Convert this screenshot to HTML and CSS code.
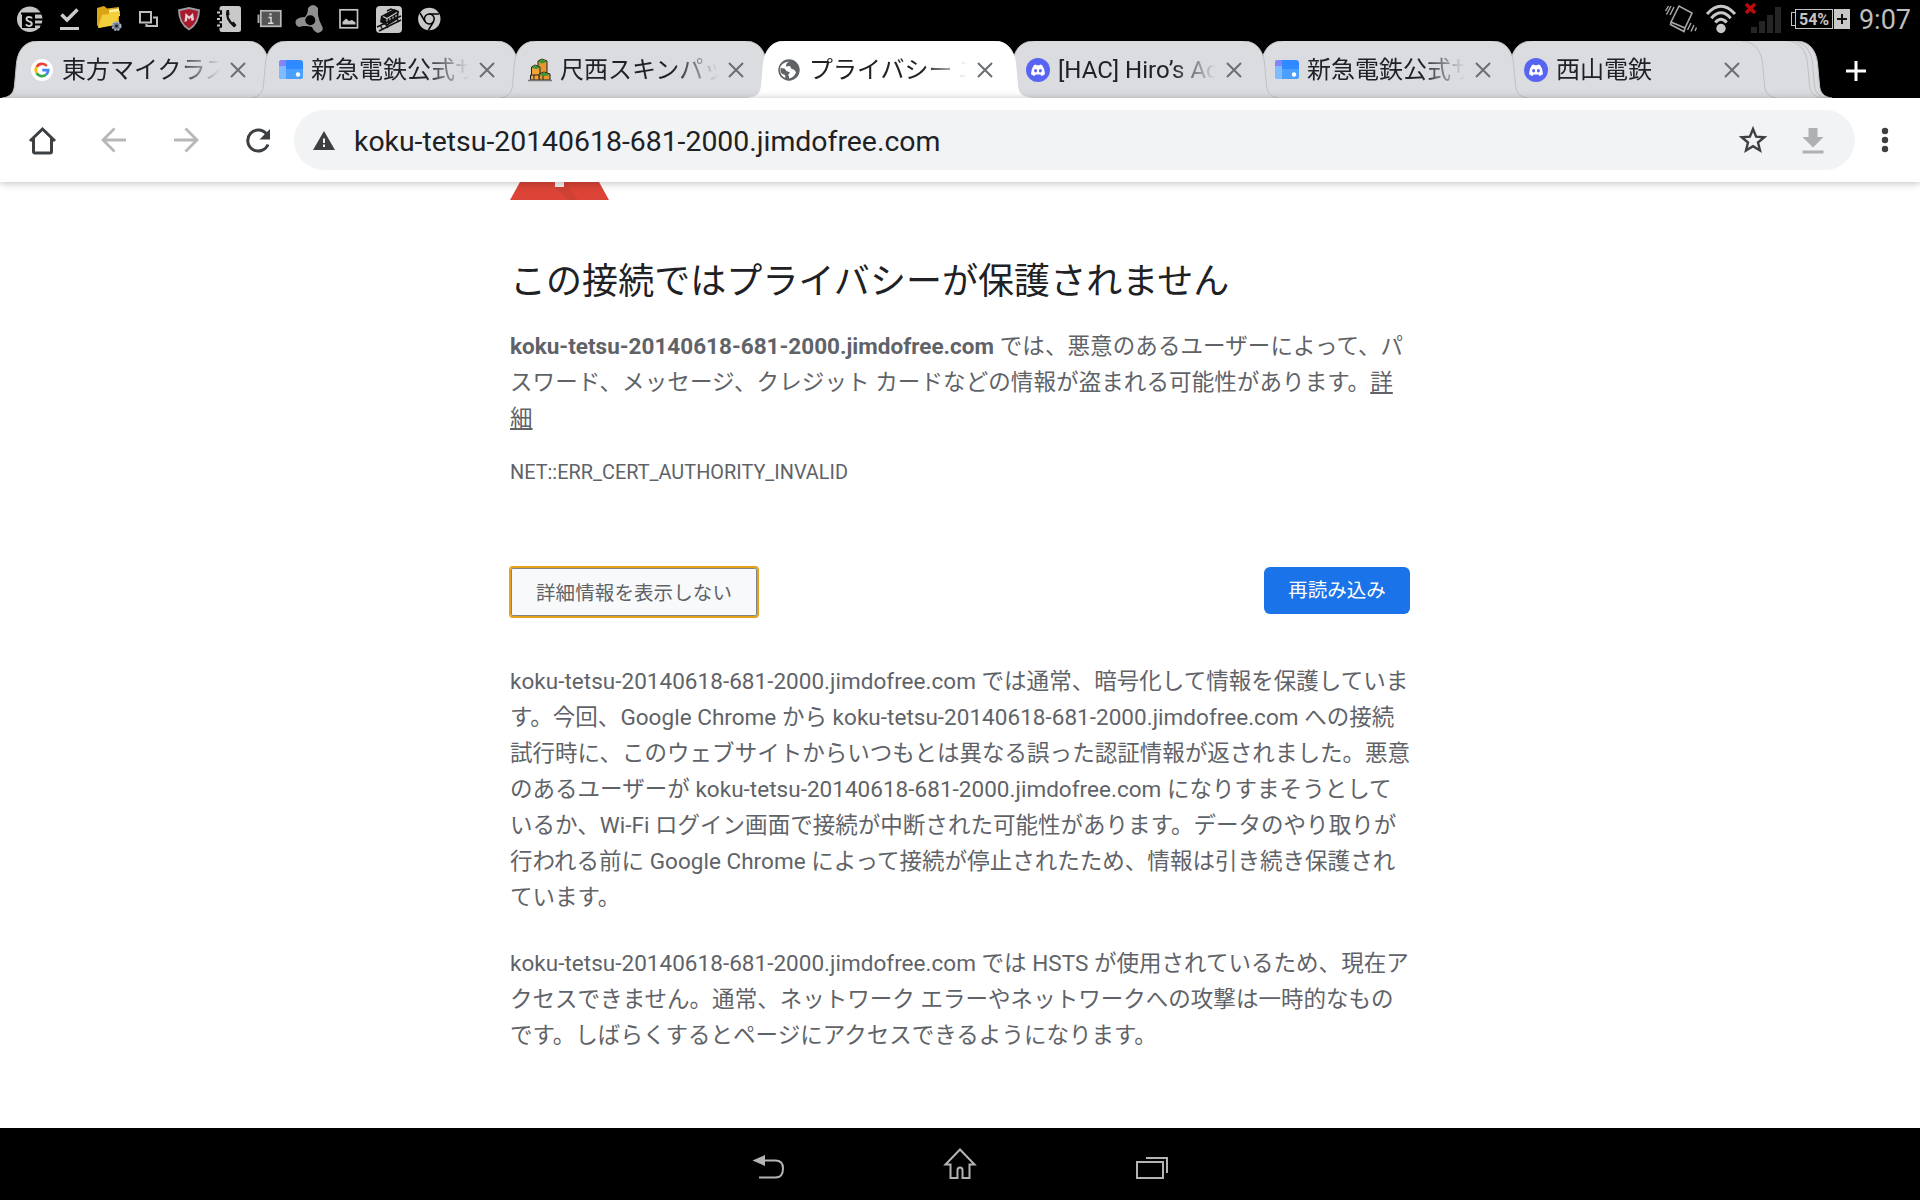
FILE: index.html
```html
<!DOCTYPE html>
<html lang="ja">
<head>
    <meta charset="UTF-8">
    <meta name="viewport" content="width=device-width, initial-scale=1.0">
    <title>プライバシー エラー</title>
    <link rel="stylesheet" href="styles.css">
</head>
<body>
    <!-- shared shapes -->
    <svg class="defs" width="0" height="0">
        <symbol id="tab-shape" viewBox="0 0 281 57">
            <path class="tab-fill" d="M0 57C9 56 12 51 12.500 44L14.500 22C16 9 23 0 36 0H245C258 0 265 9 266.500 22L268.500 44C269 51 272 56 281 57Z"/>
            <path class="tab-edge" d="M0 57C9 56 12 51 12.500 44L14.500 22C16 9 23 0 36 0M245 0C258 0 265 9 266.500 22L268.500 44C269 51 272 56 281 57"/>
        </symbol>
        <symbol id="close" viewBox="0 0 16 16">
            <path d="M1 1L15 15M15 1L1 15" stroke="#6b6e72" stroke-width="2" fill="none"/>
        </symbol>
        <symbol id="jimdo" viewBox="0 0 24 24">
            <rect x="0" y="2" width="24" height="19" rx="3" fill="#2f8aff"/>
            <path d="M6 11H24V18Q24 21 21 21H6Z" fill="#4ba0ff"/>
            <path d="M3 2H7V21H3Q0 21 0 18V5Q0 2 3 2Z" fill="#7fbcff"/>
            <path d="M3 2H7V8H0V5Q0 2 3 2Z" fill="#8583f7"/>
            <circle cx="19" cy="16.500" r="2.200" fill="#fff"/>
        </symbol>
        <symbol id="discord" viewBox="0 0 24 24">
            <circle cx="12" cy="12" r="12" fill="#5865f2"/>
            <path d="M8 7L10 6.500L10.500 7.300H13.500L14 6.500L16 7Q19 11 19 16Q17.500 17.500 15.500 18L14.500 16.500H9.500L8.500 18Q6.500 17.500 5 16Q5 11 8 7Z" fill="#fff"/>
            <ellipse cx="9.600" cy="12.700" rx="1.500" ry="1.700" fill="#5865f2"/>
            <ellipse cx="14.400" cy="12.700" rx="1.500" ry="1.700" fill="#5865f2"/>
        </symbol>
    </svg>

    <div class="status-bar">
        <div class="notifications">
            <svg viewBox="0 0 32 38">
                <circle cx="15.700" cy="19.300" r="12.700" fill="#c4c4c4"/>
                <path d="M7 13.500H28M21 19.500H29M21 24.500H28" stroke="#000" stroke-width="1.800"/>
                <rect x="8" y="13" width="13" height="15" fill="#000"/>
                <path d="M18 18.500Q17.500 17 15 17Q12.500 17 12.500 19Q12.500 20.500 15 21.300Q17.800 22 17.800 23.800Q17.800 26 15 26Q12.500 26 12 24.300" fill="none" stroke="#d0d0d0" stroke-width="1.900"/>
                <path d="M22 17H28M22 22H28M22 27H26" stroke="#c4c4c4" stroke-width="2"/>
            </svg>
            <svg viewBox="0 0 32 38">
                <path d="M7.500 14.500L13 20L23.500 9.500" fill="none" stroke="#ccc" stroke-width="3.500"/>
                <rect x="6" y="27" width="19" height="3" fill="#ccc"/>
            </svg>
            <svg viewBox="0 0 32 38">
                <path d="M3 8L10 6L13 8.500L25 7V23L5 28L3 25Z" fill="#d9a514"/>
                <path d="M15 10L25 8.500L26 16L16 18Z" fill="#fff2a8"/>
                <path d="M4 28L8 15L15 14L17 12L26 11L22 25Z" fill="#f3cf3c"/>
                <circle cx="22.500" cy="26" r="4" fill="#6b7c8e" stroke="#a9b4bf" stroke-width="2" stroke-dasharray="2 1.200"/>
                <circle cx="22.500" cy="26" r="1.600" fill="#222"/>
            </svg>
            <svg viewBox="0 0 32 38">
                <path d="M6 12H17V22.500H6ZM19 17.500H23V26H12.500V24" fill="none" stroke="#bebebe" stroke-width="2"/>
            </svg>
            <svg viewBox="0 0 32 38">
                <path d="M15 7L26 9.500Q26 24 15 30.500Q4 24 4 9.500Z" fill="#9c9ea1"/>
                <path d="M15 9L24 11Q24 22.500 15 28.500Q6 22.500 6 11Z" fill="#a91a2e"/>
                <path d="M10.500 22L11.500 13L15.200 16.500L19 13L20 20L17.500 21L17 17.500L15.200 19.500L13.300 17.500L13 21Z" fill="#e6d5d7"/>
            </svg>
            <svg viewBox="0 0 32 38">
                <rect x="5.500" y="6" width="21.500" height="26" rx="2.500" fill="#c8c8c8"/>
                <path d="M4 12.500H8M4 19H8M4 25.500H8" stroke="#000" stroke-width="4.500"/>
                <path d="M3 12.500H6M3 19H6M3 25.500H6" stroke="#c8c8c8" stroke-width="2.200"/>
                <path d="M13.500 10.500Q11 18 20.500 26.500" fill="none" stroke="#111" stroke-width="2.200"/>
                <path d="M13 10L15 10L15.500 15L13 16ZM17.500 23L19.500 21.500L22.500 25L20.500 27.500Z" fill="#111"/>
            </svg>
            <svg viewBox="0 0 32 38">
                <rect x="6.800" y="10.800" width="20" height="15.500" fill="#555" stroke="#bbb" stroke-width="1.700"/>
                <path d="M5.500 14.500H3.500V23H5.500Z" fill="#aaa"/>
                <path d="M14.500 17.500H17V23M14 23.300H19.500" fill="none" stroke="#ddd" stroke-width="1.500"/>
                <rect x="15.500" y="13.300" width="2" height="2" fill="#ddd"/>
            </svg>
            <svg viewBox="0 0 32 38">
                <path d="M14 8Q19 2 24 8L24 15Q25 21 28 26Q31 31 24 33Q20 32 18 27Q11 25 5 27Q0 25 2 20Q5 17 11 17Q14 14 14 8Z" fill="#8f8f8f"/>
                <circle cx="16.300" cy="20.300" r="5" fill="#000"/>
            </svg>
            <svg viewBox="0 0 32 38">
                <rect x="6" y="9.800" width="17.500" height="18" fill="none" stroke="#c4c4c4" stroke-width="1.700"/>
                <path d="M8.500 24.500V22L12 18.500L15 21L18 20L21.500 22.500V24.500Z" fill="#c4c4c4"/>
            </svg>
            <svg viewBox="0 0 32 38">
                <rect x="2" y="6" width="26" height="27" rx="4" fill="#c8c8c8"/>
                <path d="M7 16L20 9L25 11L24 19L13 26L6 22Z" fill="#111"/>
                <path d="M9 16.500L13 18.500L23 12.500M13 19V24M16 18L16 21M19 16.500V19.500M22 15V17.500" fill="none" stroke="#c8c8c8" stroke-width="1.100"/>
                <path d="M13 11L17 9L20 10.500" fill="none" stroke="#111" stroke-width="1.500"/>
                <path d="M3 27L27 16M5 31L27 20M6 25L9 30M11 23L14 28M22 17.500L25 22" fill="none" stroke="#111" stroke-width="1.400"/>
            </svg>
            <svg viewBox="0 0 32 38">
                <circle cx="15.300" cy="19" r="11.200" fill="#c8c8c8"/>
                <circle cx="15.300" cy="19" r="4.900" fill="none" stroke="#000" stroke-width="1.500"/>
                <path d="M15.300 14H25M11 21.500L6 13M19.600 21.500L14.500 30" stroke="#000" stroke-width="1.500"/>
            </svg>
        </div>
        <div class="system-icons">
            <svg width="34" height="38" viewBox="0 0 34 38">
                <path d="M7 22L15 6L28 13L21 28ZM7 22L6.500 24.500L20 31.500L21 28" fill="none" stroke="#a8a8a8" stroke-width="1.600"/>
                <path d="M7 6L2.500 14.500M4.500 6L1.500 11M10 7L6 15M27 23L23.500 30M30 25L27 31.500M32.500 27.500L31 31" stroke="#a8a8a8" stroke-width="1.400"/>
            </svg>
            <svg width="32" height="38" viewBox="0 0 32 38">
                <circle cx="16" cy="28.500" r="4.700" fill="#c8c8c8"/>
                <path d="M2 14Q16 -1.500 30 14M6.300 18.200Q16 7.500 25.700 18.200M10.300 22.500Q16 16 21.700 22.500" fill="none" stroke="#c8c8c8" stroke-width="3"/>
            </svg>
            <svg width="38" height="38" viewBox="0 0 38 38">
                <path d="M2 4L11 13M11 4L2 13" stroke="#c00a0a" stroke-width="3.600"/>
                <path d="M7 27H13V33H7ZM15 21H21V33H15ZM23 15H29V33H23ZM31 7H37V33H31Z" fill="#252525"/>
            </svg>
            <div class="battery"><span class="battery-level">54%</span><span class="battery-plus"></span></div>
            <span class="clock">9:07</span>
        </div>
    </div>

    <div class="tab-strip">
        <div class="tab tab-1">
            <svg class="tab-bg"><use href="#tab-shape"/></svg>
            <svg class="favicon" viewBox="0 0 24 24">
                <circle cx="12" cy="12" r="11" fill="#fff"/>
                <path d="M16.800 8A6.200 6.200 0 0 0 6.700 8.800" fill="none" stroke="#ea4335" stroke-width="2.700"/>
                <path d="M6.700 8.800A6.200 6.200 0 0 0 6.700 15.200" fill="none" stroke="#fbbc05" stroke-width="2.700"/>
                <path d="M6.700 15.200A6.200 6.200 0 0 0 16 16.700" fill="none" stroke="#34a853" stroke-width="2.700"/>
                <path d="M16 16.700A6.200 6.200 0 0 0 18.200 12.200H12.300" fill="none" stroke="#4285f4" stroke-width="2.700"/>
            </svg>
            <span class="tab-title">東方マイクラス</span>
            <svg class="tab-close"><use href="#close"/></svg>
        </div>
        <div class="tab tab-2">
            <svg class="tab-bg"><use href="#tab-shape"/></svg>
            <svg class="favicon"><use href="#jimdo"/></svg>
            <span class="tab-title">新急電鉄公式サ</span>
            <svg class="tab-close"><use href="#close"/></svg>
        </div>
        <div class="tab tab-3">
            <svg class="tab-bg"><use href="#tab-shape"/></svg>
            <svg class="favicon" viewBox="0 0 24 24">
                <path d="M10 3L14 1L19 3V22H10Z" fill="#e8962e" stroke="#222"/>
                <path d="M3.500 9L7 7L12 9V22H3.500Z" fill="#f2a33a" stroke="#222"/>
                <path d="M11 16L16 14L22 16V22H11Z" fill="#e8962e" stroke="#222"/>
                <path d="M2.500 17H11V22H2.500ZM6 17V22M15 17V22" fill="#f2a33a" stroke="#222"/>
                <path d="M10 4L14 1L19 4L14 5.500ZM3.500 10L7 7L12 10L8 11ZM11 17L16 14L22 17L17 18Z" fill="#3d9632"/>
                <path d="M0 22.500H24" stroke="#777" stroke-width="1.500"/>
            </svg>
            <span class="tab-title">尺西スキンパッ</span>
            <svg class="tab-close"><use href="#close"/></svg>
        </div>
        <div class="tab tab-4 active">
            <svg class="tab-bg"><use href="#tab-shape"/></svg>
            <svg class="favicon" viewBox="0 0 24 24">
                <circle cx="12" cy="12" r="10.700" fill="#5f6368"/>
                <path d="M12.500 3.500Q8.500 5 9 8.500L13 8L14.500 11Q18 11 19 14.500Q17 19.500 12 20.500Q12.500 18 11 17L13 14.500L9.500 13L7.500 10.500L3.500 10Q3 13 4.500 15.500L8 17L8.500 20Q3 18 2.800 11Q4 4 12.500 3.500Z" fill="#fff"/>
            </svg>
            <span class="tab-title">プライバシー エ</span>
            <svg class="tab-close"><use href="#close"/></svg>
        </div>
        <div class="tab tab-5">
            <svg class="tab-bg"><use href="#tab-shape"/></svg>
            <svg class="favicon"><use href="#discord"/></svg>
            <span class="tab-title">[HAC] Hiro’s Ad</span>
            <svg class="tab-close"><use href="#close"/></svg>
        </div>
        <div class="tab tab-6">
            <svg class="tab-bg"><use href="#tab-shape"/></svg>
            <svg class="favicon"><use href="#jimdo"/></svg>
            <span class="tab-title">新急電鉄公式サ</span>
            <svg class="tab-close"><use href="#close"/></svg>
        </div>
        <div class="tab tab-7">
            <svg class="tab-bg"><use href="#tab-shape"/></svg>
            <svg class="favicon"><use href="#discord"/></svg>
            <span class="tab-title">西山電鉄</span>
            <svg class="tab-close"><use href="#close"/></svg>
        </div>
        <div class="tab stacked stacked-1"><svg class="tab-bg"><use href="#tab-shape"/></svg></div>
        <div class="tab stacked stacked-2"><svg class="tab-bg"><use href="#tab-shape"/></svg></div>
        <div class="tab stacked stacked-3"><svg class="tab-bg"><use href="#tab-shape"/></svg></div>
        <svg class="new-tab" viewBox="0 0 22 22"><path d="M11 1V21M1 11H21" stroke="#fff" stroke-width="3"/></svg>
    </div>

    <div class="toolbar">
        <svg class="tool" viewBox="0 0 36 36"><path d="M6 19L18.500 7L31 19M9.500 16.500V29.500Q9.500 31 11 31H26Q27.500 31 27.500 29.500V16.500" fill="none" stroke="#3c4043" stroke-width="3"/></svg>
        <svg class="tool" viewBox="0 0 36 36"><path d="M30 18H7.500M18.500 6.500L7 18L18.500 29.500" fill="none" stroke="#b5b7b9" stroke-width="2.800"/></svg>
        <svg class="tool" viewBox="0 0 36 36"><path d="M6 18H28.500M17.500 6.500L29 18L17.500 29.500" fill="none" stroke="#b5b7b9" stroke-width="2.800"/></svg>
        <svg class="tool" viewBox="0 0 36 36"><path d="M26.500 12A10.500 10.500 0 1 0 28 22.500" fill="none" stroke="#3c4043" stroke-width="3"/><path d="M30 7V17.500H19.500Z" fill="#3c4043"/></svg>
        <div class="omnibox">
            <svg class="warning" viewBox="0 0 22 20"><path d="M11 1L22 20H0Z" fill="#3c4043"/><path d="M11 8.500V13M11 14.500V17" stroke="#f1f3f4" stroke-width="2"/></svg>
            <span class="url">koku-tetsu-20140618-681-2000.jimdofree.com</span>
            <svg class="star" viewBox="0 0 36 36"><path d="M18 7L21.100 14.600L29.300 15.200L23 20.500L25 28.500L18 24.200L11 28.500L13 20.500L6.700 15.200L14.900 14.600Z" fill="none" stroke="#3c4043" stroke-width="2.400"/></svg>
            <svg class="download" viewBox="0 0 36 36"><path d="M13.500 6H22.500V15H28.500L18 25.500L7.500 15H13.500ZM7.500 28.500H28.500V31.500H7.500Z" fill="#aeb1b3"/></svg>
        </div>
        <svg class="menu" viewBox="0 0 8 26"><g fill="#3c4043"><circle cx="4" cy="4" r="3.200"/><circle cx="4" cy="13" r="3.200"/><circle cx="4" cy="22" r="3.200"/></g></svg>
    </div>

    <main class="page">
        <div class="interstitial">
            <svg class="ssl-icon" viewBox="0 0 99 18">
                <path d="M10 0H89L99 18H0Z" fill="#db4437"/>
                <path d="M45 5L54 0L68 18H58Z" fill="#cf4135"/>
                <rect x="45" y="0" width="9" height="5" fill="#f1f1f1"/>
            </svg>
            <h1>この接続ではプライバシーが保護されません</h1>
            <p class="message"><strong>koku-tetsu-20140618-681-2000.jimdofree.com</strong> では、悪意のあるユーザーによって、パ<br>スワード、メッセージ、クレジット カードなどの情報が盗まれる可能性があります。<a href="#">詳<br>細</a></p>
            <div class="error-code">NET::ERR_CERT_AUTHORITY_INVALID</div>
            <div class="buttons">
                <button class="details-button">詳細情報を表示しない</button>
                <button class="primary-button">再読み込み</button>
            </div>
            <div class="details">
                <p>koku-tetsu-20140618-681-2000.jimdofree.com では通常、暗号化して情報を保護していま<br>す。今回、Google Chrome から koku-tetsu-20140618-681-2000.jimdofree.com への接続<br>試行時に、このウェブサイトからいつもとは異なる誤った認証情報が返されました。悪意<br>のあるユーザーが koku-tetsu-20140618-681-2000.jimdofree.com になりすまそうとして<br>いるか、Wi-Fi ログイン画面で接続が中断された可能性があります。データのやり取りが<br>行われる前に Google Chrome によって接続が停止されたため、情報は引き続き保護され<br>ています。</p>
                <p>koku-tetsu-20140618-681-2000.jimdofree.com では HSTS が使用されているため、現在ア<br>クセスできません。通常、ネットワーク エラーやネットワークへの攻撃は一時的なもの<br>です。しばらくするとページにアクセスできるようになります。</p>
            </div>
        </div>
    </main>

    <div class="nav-bar">
        <svg viewBox="0 0 48 72"><path d="M18 32.500H31.500Q39 32.500 39 40.500Q39 49.500 31.500 49.500H15" fill="none" stroke="#b4b4b4" stroke-width="2"/><path d="M8.500 32.500L21 27V38Z" fill="#b4b4b4"/></svg>
        <svg viewBox="0 0 48 72"><path d="M24 21.500L38.500 36.500H33.500V50H26.500V42Q26.500 39.500 24 39.500Q21.500 39.500 21.500 42V50H14.500V36.500H9.500Z" fill="none" stroke="#b4b4b4" stroke-width="2"/></svg>
        <svg viewBox="0 0 48 72"><path d="M9 34H35V50H9ZM18 30H39V45" fill="none" stroke="#b4b4b4" stroke-width="2"/></svg>
    </div>
</body>
</html>
```

FILE: styles.css
```css
* {
    box-sizing: border-box;
}

body {
    margin: 0;
    width: 1920px;
    height: 1200px;
    overflow: hidden;
    display: flex;
    flex-direction: column;
    background-color: #000;
    font-family: Roboto, 'Noto Sans CJK JP', sans-serif;
}

svg {
    display: block;
    flex-shrink: 0;
}

.defs {
    position: absolute;
}

/* status bar */
.status-bar {
    height: 41px;
    flex-shrink: 0;
    display: flex;
    justify-content: space-between;
    padding: 0 9px 0 14px;
}

.notifications {
    display: flex;
    gap: 8px;
}

.notifications svg {
    width: 32px;
    height: 38px;
}

.system-icons {
    display: flex;
    align-items: flex-start;
}

.system-icons svg {
    margin-right: 7px;
}

.battery {
    display: flex;
    align-items: center;
    width: 56px;
    height: 20px;
    margin: 9px 9px 0 5px;
    color: #c4c4c4;
}

.battery-level {
    width: 39px;
    height: 20px;
    border: 1px solid #c4c4c4;
    font-size: 16px;
    font-weight: bold;
    line-height: 19px;
    text-align: center;
}

.battery::before {
    content: '';
    width: 3px;
    height: 12px;
    margin-left: -3px;
    border: 1px solid #c4c4c4;
    border-right: none;
}

.battery-plus {
    width: 16px;
    height: 20px;
    margin-left: 1px;
    background:
        linear-gradient(#111, #111) center / 10px 2px no-repeat,
        linear-gradient(#111, #111) center / 2px 10px no-repeat,
        #c8c8c8;
}

.clock {
    color: #bebebe;
    font-size: 27px;
    line-height: 40px;
}

/* tabs */
.tab-strip {
    height: 57px;
    flex-shrink: 0;
    display: flex;
    padding-left: 2px;
}

.tab {
    position: relative;
    display: flex;
    align-items: center;
    flex-shrink: 0;
    width: 281px;
    height: 57px;
    padding-left: 28px;
    --tab-color: #dadce0;
    --edge-color: #bfc1c4;
}

.active {
    --tab-color: #fff;
    --edge-color: #fff;
}

.tab + .tab {
    margin-left: -32px;
}

.tab-bg {
    position: absolute;
    left: 0;
    top: 0;
    width: 281px;
    height: 57px;
    z-index: -1;
}

.tab-fill {
    fill: var(--tab-color);
}

.tab-edge {
    fill: none;
    stroke: var(--edge-color);
    stroke-width: 1;
}

.tab-1 { z-index: 1; }
.tab-2 { z-index: 2; }
.tab-3 { z-index: 3; }
.tab-4 { z-index: 9; }
.tab-5 { z-index: 8; }
.tab-6 { z-index: 7; }
.tab-7 { z-index: 6; }
.stacked-1 { z-index: 5; }
.stacked-2 { z-index: 4; }
.stacked-3 { z-index: 3; }

.tab + .stacked {
    margin-left: -236px;
}

.stacked + .stacked {
    margin-left: -276px;
}

.favicon {
    width: 24px;
    height: 24px;
}

/* long titles fade out before the close button */
.tab-title {
    width: 184px;
    margin-left: 8px;
    white-space: nowrap;
    color: #202124;
    font-size: 24px;
    line-height: 36px;
    -webkit-mask-image: linear-gradient(to right, #000 114px, transparent 158px);
    mask-image: linear-gradient(to right, #000 114px, transparent 158px);
}

.tab-close {
    width: 16px;
    height: 16px;
    margin-left: -16px;
}

.new-tab {
    width: 22px;
    height: 22px;
    margin: 19px 0 0 13px;
}

/* toolbar */
.toolbar {
    position: relative;
    z-index: 10;
    height: 84px;
    flex-shrink: 0;
    display: flex;
    align-items: center;
    padding-left: 24px;
    background-color: #fff;
    box-shadow: 0 1px 8px rgba(0, 0, 0, 0.26);
}

.tool {
    width: 36px;
    height: 36px;
    margin-right: 36px;
}

.omnibox {
    display: flex;
    align-items: center;
    width: 1561px;
    height: 60px;
    margin-left: -18px;
    padding-left: 19px;
    border-radius: 30px;
    background-color: #f1f3f4;
}

.warning {
    width: 22px;
    height: 20px;
}

.url {
    flex: 1;
    margin-left: 19px;
    padding-top: 2px;
    color: #202124;
    font-size: 28.400px;
}

.star,
.download {
    width: 36px;
    height: 36px;
    margin-right: 24px;
}

.menu {
    width: 8px;
    height: 26px;
    margin-left: 26px;
}

/* page */
.page {
    flex: 1;
    background-color: #fff;
    color: #5f6368;
    font-size: 22.500px;
    line-height: 36px;
}

.interstitial {
    width: 900px;
    margin: 0 auto;
    white-space: nowrap;
}

.ssl-icon {
    width: 99px;
    height: 18px;
}

h1 {
    margin: 60px 0 23px;
    color: #202124;
    font-size: 36px;
    font-weight: normal;
    line-height: 45px;
    letter-spacing: 0.060px;
}

p {
    margin: 0;
    letter-spacing: 0.030px;
}

.message {
    letter-spacing: 0.100px;
}

.message strong {
    letter-spacing: 0;
}

.message a {
    color: inherit;
}

.error-code {
    margin-top: 22px;
    font-size: 19.900px;
    line-height: 29px;
}

.buttons {
    display: flex;
    justify-content: space-between;
    align-items: flex-start;
    margin-top: 80px;
}

button {
    border: none;
    font-family: inherit;
    font-size: 19.500px;
}

/* focused: orange ring around the grey border */
.details-button {
    width: 250px;
    height: 52px;
    margin: -1px 0 -2px -1px;
    padding: 0 24px 2px;
    border: 2px solid #e5a11c;
    border-radius: 4px;
    background-color: #f8f9fa;
    box-shadow: inset 0 0 0 1px #80868b;
    color: #5f6368;
    letter-spacing: 0.100px;
}

.primary-button {
    width: 146px;
    height: 47px;
    padding: 0 24px 4px;
    border-radius: 6px;
    background-color: #1a73e8;
    color: #fff;
}

.details {
    margin-top: 47px;
}

.details p + p {
    margin-top: 30px;
}

/* navigation bar */
.nav-bar {
    height: 72px;
    flex-shrink: 0;
    display: flex;
    justify-content: center;
    gap: 144px;
}

.nav-bar svg {
    width: 48px;
    height: 72px;
}
```
